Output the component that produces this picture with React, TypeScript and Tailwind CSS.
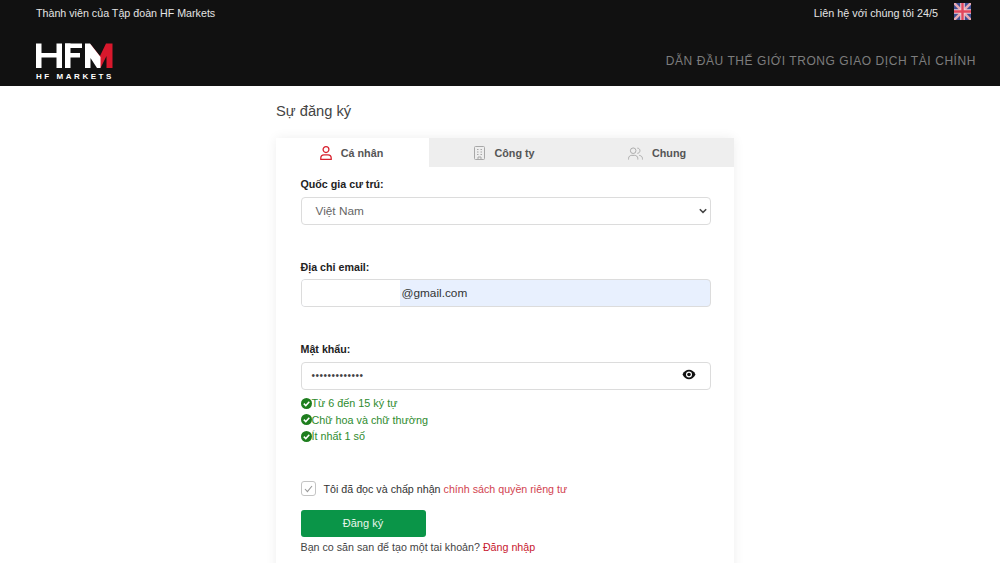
import React from "react";

const font = "font-['Liberation_Sans',Arial,sans-serif]";

function Logo() {
  return (
    <div className="flex w-[78px] flex-col">
      <svg width="77" height="26" viewBox="0 0 77 26" className="block">
        <polygon fill="#d8182c" points="54,0.5 64,13 70,0.5 76.5,0.5 76.5,25 70.5,25 70.5,13 64.5,25" />
        <g fill="#ffffff">
          <rect x="0" y="0.5" width="5.5" height="24.5" />
          <rect x="20.5" y="0.5" width="5.5" height="24.5" />
          <rect x="0" y="10" width="26" height="4.5" />
          <rect x="29" y="0.5" width="5.5" height="24.5" />
          <rect x="29" y="0.5" width="17" height="4.5" />
          <rect x="29" y="10" width="15" height="4.5" />
          <polygon points="49,0.5 54,0.5 64.5,14 64.5,25 61,25 54.5,15 54.5,25 49,25" />
        </g>
      </svg>
      <span className="mt-[3px] text-[8px] leading-[9px] font-bold tracking-[2.55px] whitespace-nowrap text-white">HF MARKETS</span>
    </div>
  );
}

function Flag() {
  return (
    <svg width="17" height="17" viewBox="0 0 17 17" className="block">
      <rect width="17" height="17" rx="2" fill="#3f4f95" />
      <path d="M0 0L17 17M17 0L0 17" stroke="#e9a9b2" strokeWidth="2.6" />
      <path d="M8.5 0V17M0 8.5H17" stroke="#f0ccd2" strokeWidth="4.6" />
      <path d="M8.5 0V17M0 8.5H17" stroke="#e2465c" strokeWidth="2.4" />
    </svg>
  );
}

function PersonIcon() {
  return (
    <svg width="12" height="14" viewBox="0 0 12 14" fill="none" stroke="#d8222f" strokeWidth="1.3" className="block">
      <circle cx="6" cy="3.6" r="2.9" />
      <path d="M0.8 13.3v-1.3c0-2 1.4-3.2 3.2-3.2h4c1.8 0 3.2 1.2 3.2 3.2v1.3Z" />
    </svg>
  );
}

function BuildingIcon() {
  return (
    <svg width="11" height="14" viewBox="0 0 11 14" fill="none" stroke="#a8a8a8" strokeWidth="1" className="block">
      <rect x="0.5" y="0.5" width="10" height="13" rx="1" />
      <path d="M3 3.5h1.5M6.5 3.5H8M3 6h1.5M6.5 6H8M3 8.5h1.5M6.5 8.5H8M4 13.5v-2.5h3v2.5" />
    </svg>
  );
}

function PeopleIcon() {
  return (
    <svg width="15" height="13" viewBox="0 0 16 14" fill="none" stroke="#a8a8a8" strokeWidth="1" className="block">
      <circle cx="5.5" cy="4" r="3" />
      <path d="M0.5 13.5v-1C0.5 10 2.3 9 4 9h3c1.7 0 3.5 1 3.5 3.5v1" />
      <path d="M10 1.2c1.6 0 2.8 1.2 2.8 2.8S11.6 6.8 10 6.8M12 9c2 .3 3.5 1.4 3.5 3.5v1" />
    </svg>
  );
}

function Check() {
  return (
    <svg width="11" height="11" viewBox="0 0 11 11" className="block shrink-0">
      <circle cx="5.5" cy="5.5" r="5.5" fill="#1e7e1e" />
      <path d="M2.8 5.6l2 2 3.5-3.8" fill="none" stroke="#ffffff" strokeWidth="1.5" />
    </svg>
  );
}

function Rule({ text }: { text: string }) {
  return (
    <div className="flex h-[16.5px] items-center text-[10.8px] text-[#2e8b2e]">
      <Check />
      <span>{text}</span>
    </div>
  );
}

function Eye() {
  return (
    <svg width="14" height="11" viewBox="0 0 14 11" className="block">
      <path d="M0.5 5.5C2 2.3 4.3 0.8 7 0.8s5 1.5 6.5 4.7C12 8.7 9.7 10.2 7 10.2S2 8.7 0.5 5.5Z" fill="#111111" />
      <circle cx="7" cy="5.5" r="3" fill="#ffffff" />
      <circle cx="7" cy="5.5" r="1.8" fill="#111111" />
    </svg>
  );
}

function Tab({ icon, label, className }: { icon: React.ReactNode; label: string; className: string }) {
  return (
    <div className={`flex h-[29px] items-center justify-center gap-[9px] pt-[1px] pr-[2px] text-[10.8px] font-bold text-[#555555] ${className}`}>
      {icon}
      <span>{label}</span>
    </div>
  );
}

export default function App() {
  return (
    <div className={`h-[573px] w-[1000px] bg-white ${font}`}>
      <div className="h-[563px] overflow-hidden">
        <header className="h-[86px] bg-[#111111] pr-[24px] pl-[36px]">
          <div className="flex h-[43px] items-start justify-between">
            <span className="pt-[6px] text-[10.7px] leading-[14px] text-[#e4e4e4]">Thành viên của Tập đoàn HF Markets</span>
            <div className="flex items-start gap-[16px] pt-[3px] pr-[5px]">
              <span className="pt-[3px] text-[10.8px] leading-[14px] text-[#e4e4e4]">Liên hệ với chúng tôi 24/5</span>
              <Flag />
            </div>
          </div>
          <div className="flex items-start justify-between">
            <Logo />
            <span className="pt-[11px] text-[12px] leading-[15px] tracking-[0.57px] text-[#7d7d7d]">DẪN ĐẦU THẾ GIỚI TRONG GIAO DỊCH TÀI CHÍNH</span>
          </div>
        </header>

        <main className="ml-[276px] w-[458px]">
          <h1 className="pt-[16px] text-[14.7px] leading-[18px] font-normal text-[#444444]">Sự đăng ký</h1>

          <div className="mt-[18px] rounded-t-[3px] bg-white pb-[40px] shadow-[0_0_12px_rgba(0,0,0,0.07)]">
            <div className="flex">
              <Tab icon={<PersonIcon />} label="Cá nhân" className="w-[153px] bg-white" />
              <Tab icon={<BuildingIcon />} label="Công ty" className="w-[153px] bg-[#eeeeee]" />
              <Tab icon={<PeopleIcon />} label="Chung" className="w-[152px] bg-[#eeeeee]" />
            </div>

            <div className="pl-[24.5px]">
              <div className="w-[410px]">
                <label className="block pt-[10px] text-[10.7px] leading-[14px] font-bold text-[#222222]">Quốc gia cư trú:</label>
                <div className="mt-[6px] flex h-[28px] items-center justify-between rounded-[4px] border border-[#dcdcdc] pr-[3px] pl-[14px] text-[11.8px] text-[#666666]">
                  <span className="pt-[1px]">Việt Nam</span>
                  <svg width="8" height="6" viewBox="0 0 8 6" fill="none" stroke="#444444" strokeWidth="1.5" className="block">
                    <path d="M0.8 1.2L4 4.4l3.2-3.2" />
                  </svg>
                </div>

                <label className="mt-[35px] block text-[10.7px] leading-[14px] font-bold text-[#222222]">Địa chỉ email:</label>
                <div className="mt-[5px] flex h-[28px] overflow-hidden rounded-[4px] border border-[#dcdcdc] bg-[#e8f0fe] text-[11.8px] text-[#333333]">
                  <div className="w-[98px] bg-white" />
                  <span className="pl-[2px] leading-[26px]">@gmail.com</span>
                </div>

                <label className="mt-[35px] block text-[10.7px] leading-[14px] font-bold text-[#222222]">Mật khẩu:</label>
                <div className="mt-[6px] flex h-[28px] items-center justify-between rounded-[4px] border border-[#dcdcdc] pr-[14px] pl-[10px]">
                  <span className="pb-[1px] text-[10px] tracking-[0.5px] text-[#444444]">•••••••••••••</span>
                  <div className="pb-[3px]">
                    <Eye />
                  </div>
                </div>

                <div className="mt-[5px]">
                  <Rule text="Từ 6 đến 15 ký tự" />
                  <Rule text="Chữ hoa và chữ thường" />
                  <Rule text="Ít nhất 1 số" />
                </div>

                <div className="mt-[36px] flex items-center gap-[8px] text-[10.7px] leading-[16px] text-[#333333]">
                  <div className="flex h-[15px] w-[15px] items-center justify-center rounded-[3px] border border-[#c4c4c4]">
                    <svg width="9" height="8" viewBox="0 0 9 8" fill="none" stroke="#999999" strokeWidth="1.1" className="block">
                      <path d="M1 4l2.4 2.6L8 1" />
                    </svg>
                  </div>
                  <span>
                    Tôi đã đọc và chấp nhận <span className="text-[#d2434f]">chính sách quyền riêng tư</span>
                  </span>
                </div>

                <button className="mt-[13px] block h-[27px] w-[125px] rounded-[3px] bg-[#0a9548] text-[11px] text-[#e8f5ec]">Đăng ký</button>

                <p className="mt-[3px] text-[10.7px] leading-[14px] text-[#444444]">
                  Bạn co săn san để tạo một tai khoản? <span className="text-[#c8202f]">Đăng nhập</span>
                </p>
              </div>
            </div>
          </div>
        </main>
      </div>
    </div>
  );
}
